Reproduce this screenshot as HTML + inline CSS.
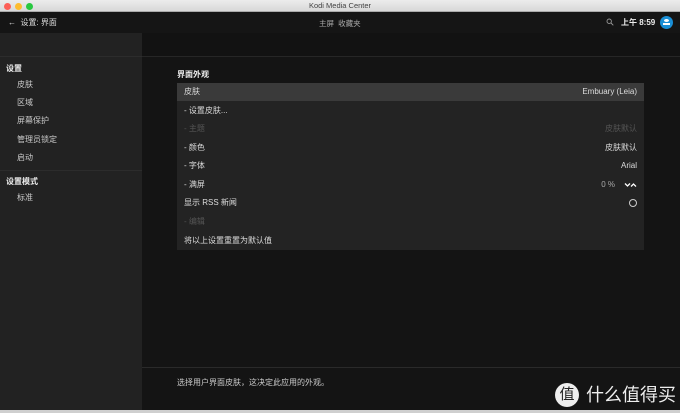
<!DOCTYPE html>
<html><head><meta charset="utf-8"><style>
*{margin:0;padding:0;box-sizing:border-box}
body{width:680px;height:413px;background:#1a1a1a;font-family:"Liberation Sans","Noto Sans CJK SC",sans-serif;color:#ddd;position:relative;overflow:hidden;font-size:8px}
.abs{position:absolute}
#tb{left:0;top:0;width:680px;height:12px;background:linear-gradient(#ececec,#d8d8d8);border-bottom:1px solid #aaa;text-align:center;font-size:7.5px;color:#444;line-height:12px}
.dot{top:3px;width:7px;height:7px;border-radius:50%}
#hdr{left:0;top:12px;width:680px;height:21px;background:#151515}
#side{left:0;top:33px;width:142px;height:377px;background:#222}
#main{left:142px;top:33px;width:538px;height:377px;background:#141414}
#panel{left:177px;top:83px;width:467px;height:167px;background:#232323}
.row{position:absolute;left:177px;width:467px;height:18px;line-height:18px;padding:0 7px;font-size:8px;color:#ddd}
.row .r{position:absolute;right:7px;top:0}
.dim{color:#555!important}
.sl{position:absolute;left:17px;font-size:8px;color:#ccc}
.sh{position:absolute;left:6px;font-size:8px;color:#eee;font-weight:bold}
</style></head><body>
<div id="tb" class="abs">Kodi Media Center</div>
<div class="abs dot" style="left:4px;background:#fc5f57"></div>
<div class="abs dot" style="left:15px;background:#fdbc2e"></div>
<div class="abs dot" style="left:26px;background:#28c840"></div>
<div id="hdr" class="abs"></div>
<div class="abs" style="left:8px;top:17px;font-size:8px;color:#ddd">←&nbsp; 设置: 界面</div>
<div class="abs" style="left:319px;top:18px;font-size:7.5px;color:#aaa">主屏 &nbsp;收藏夹</div>
<svg class="abs" style="left:606px;top:18px" width="8" height="8" viewBox="0 0 8 8"><circle cx="3.2" cy="3.2" r="2.2" fill="none" stroke="#999" stroke-width="0.9"/><path d="M5 5L7.3 7.3" stroke="#999" stroke-width="0.9"/></svg>
<div class="abs" style="left:621px;top:17px;font-size:8px;color:#eee;font-weight:bold">上午 8:59</div>
<div class="abs" style="left:660px;top:16px;width:13px;height:13px;border-radius:50%;background:#1a8fd6"></div>
<div class="abs" style="left:664px;top:19px;width:5px;height:3px;border-radius:50%;background:#fff"></div>
<div class="abs" style="left:663px;top:23px;width:7px;height:2px;background:#fff"></div>
<div id="side" class="abs"></div>
<div class="abs" style="left:0;top:56px;width:142px;height:1px;background:#2c2c2c"></div>
<div class="abs" style="left:0;top:170px;width:142px;height:1px;background:#2c2c2c"></div>
<div id="main" class="abs"></div>
<div class="abs" style="left:142px;top:33px;width:538px;height:23px;background:#121212"></div>
<div class="abs" style="left:142px;top:56px;width:538px;height:1px;background:#262626"></div>
<div class="abs" style="left:142px;top:367px;width:538px;height:1px;background:#2a2a2a"></div>
<div class="abs" style="left:0;top:410px;width:680px;height:3px;background:#cfcfcf"></div>
<div class="sh" style="top:63px">设置</div>
<div class="sl" style="top:79px">皮肤</div>
<div class="sl" style="top:97px">区域</div>
<div class="sl" style="top:115px">屏幕保护</div>
<div class="sl" style="top:134px">管理员锁定</div>
<div class="sl" style="top:152px">启动</div>
<div class="sh" style="top:176px">设置模式</div>
<div class="sl" style="top:192px">标准</div>
<div class="abs" style="left:177px;top:69px;font-size:8px;font-weight:bold;color:#eee">界面外观</div>
<div id="panel" class="abs"></div>
<div class="row" style="top:83px;background:#3a3a3a">皮肤<span class="r">Embuary (Leia)</span></div>
<div class="row" style="top:102px">- 设置皮肤...</div>
<div class="row dim" style="top:120px">- 主题<span class="r">皮肤默认</span></div>
<div class="row" style="top:139px">- 颜色<span class="r">皮肤默认</span></div>
<div class="row" style="top:157px">- 字体<span class="r">Arial</span></div>
<div class="row" style="top:176px">- 满屏<span class="r" style="right:29px;color:#aaa">0 %</span><svg style="position:absolute;right:7px;top:6px" width="13" height="6" viewBox="0 0 13 6"><path d="M1 1.5L3.5 4L6 1.5M7 4.5L9.5 2L12 4.5" fill="none" stroke="#fff" stroke-width="1.3"/></svg></div>
<div class="row" style="top:194px">显示 RSS 新闻<span class="r"><span style="display:inline-block;width:8px;height:8px;border:1px solid #ccc;border-radius:50%;vertical-align:middle"></span></span></div>
<div class="row dim" style="top:213px">- 编辑</div>
<div class="row" style="top:232px">将以上设置重置为默认值</div>
<div class="abs" style="left:177px;top:377px;font-size:8px;color:#ccc">选择用户界面皮肤，这决定此应用的外观。</div>
<div class="abs" style="left:555px;top:383px;width:24px;height:24px;border-radius:50%;background:#eee;color:#222;font-size:15px;text-align:center;line-height:24px">值</div>
<div class="abs" style="left:586px;top:381px;font-size:18px;color:#eee">什么值得买</div>
</body></html>
